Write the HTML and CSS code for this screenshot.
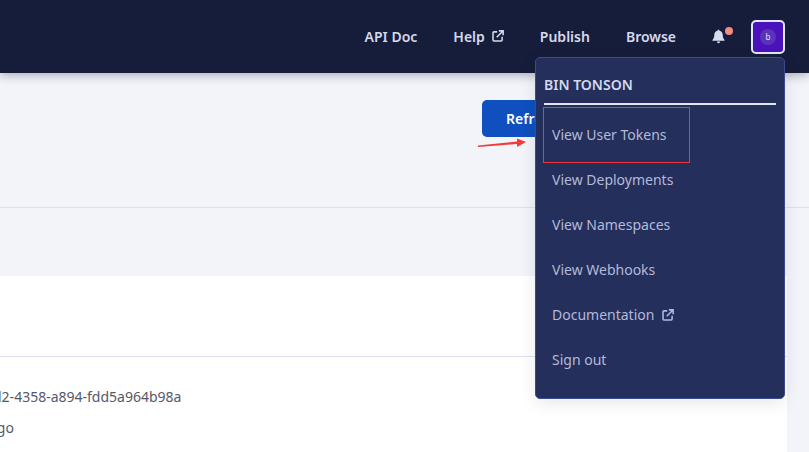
FILE: index.html
```html
<!DOCTYPE html>
<html lang="en">
<head>
<meta charset="utf-8">
<title>Tokens</title>
<link rel="stylesheet" href="styles.css">
</head>
<body>
<header class="topbar">
  <nav class="nav">
    <a class="nav-link">API Doc</a>
    <a class="nav-link">Help
      <svg class="ext" viewBox="0 0 14 14"><path d="M6 2.200H2.200a1 1 0 0 0-1 1v8.600a1 1 0 0 0 1 1h8.600a1 1 0 0 0 1-1V8M5.500 8.500 12.500 1.500M8 1h5v5" fill="none" stroke="currentColor" stroke-width="1.800"/></svg>
    </a>
    <a class="nav-link">Publish</a>
    <a class="nav-link">Browse</a>
  </nav>
  <div class="bell">
    <svg viewBox="0 0 16 16" class="bell-icon"><path d="M8 0.800c.7 0 1.100.5 1.100 1.100 2.200.6 3.400 2.400 3.400 4.600 0 2.400.6 3.700 1.900 5.100.3.400.1.900-.4.900H2c-.5 0-.7-.5-.4-.9C2.900 10.200 3.500 8.900 3.500 6.500c0-2.200 1.200-4 3.400-4.600C6.900 1.300 7.300.8 8 .8zM6.300 13.400h3.400C9.700 14.400 9 15.200 8 15.200s-1.700-.8-1.700-1.800z" fill="currentColor"/></svg>
    <span class="dot"></span>
  </div>
  <div class="avatar"><span class="avatar-inner">b</span></div>
</header>

<main class="page">
  <div class="toolbar"><button class="refresh">Refresh</button></div>
  <div class="band"></div>
  <section class="card">
    <div class="card-head"></div>
    <div class="card-body">
      <p class="row row-id">d2-4358-a894-fdd5a964b98a</p>
      <p class="row row-age">ago</p>
    </div>
  </section>
</main>

<aside class="menu">
  <div class="menu-name">BIN TONSON</div>
  <ul class="menu-list">
    <li>View User Tokens</li>
    <li>View Deployments</li>
    <li>View Namespaces</li>
    <li>View Webhooks</li>
    <li>Documentation
      <svg class="ext ext-menu" viewBox="0 0 14 14"><path d="M6 2.200H2.200a1 1 0 0 0-1 1v8.600a1 1 0 0 0 1 1h8.600a1 1 0 0 0 1-1V8M5.500 8.500 12.500 1.500M8 1h5v5" fill="none" stroke="currentColor" stroke-width="1.800"/></svg>
    </li>
    <li>Sign out</li>
  </ul>
</aside>

<div class="mark-box"></div>
<svg class="mark-arrow" viewBox="0 0 50 12"><path d="M0 8.500 39 4.500 39 1.500 48 5 39 10 39 7 0 10Z" fill="#f23a3a"/></svg>
</body>
</html>
```
FILE: styles.css
```css
* { box-sizing: border-box; }
html, body { margin: 0; height: 100%; overflow: hidden; }
body {
  background: #f3f4fa;
  font-family: "Noto Sans", "Open Sans", sans-serif;
  font-size: 14px;
}
.topbar {
  height: 73px;
  background: #151d3b;
  display: flex;
  align-items: center;
  justify-content: flex-end;
  padding-right: 24px;
  box-shadow: 0 2px 10px rgba(21, 29, 59, .35);
  position: relative;
  z-index: 1;
}
.nav { display: flex; gap: 36px; margin-right: 35px; }
.nav-link {
  color: #d5d9ec;
  font-size: 14px;
  font-weight: 600;
  display: flex;
  align-items: center;
  gap: 7px;
  line-height: 20px;
}
.ext { width: 12px; height: 12px; margin-top: -1px; }
.bell { position: relative; width: 16px; height: 16px; margin-right: 24px; color: #d8dcf0; }
.bell-icon { display: block; width: 15px; height: 15px; }
.dot {
  position: absolute;
  top: -2px;
  left: 14px;
  width: 8px;
  height: 8px;
  border-radius: 50%;
  background: #f38b82;
}
.avatar {
  width: 34px;
  height: 34px;
  border: 2px solid #e3e6f6;
  border-radius: 5px;
  background: #4b12bc;
  display: flex;
  align-items: center;
  justify-content: center;
}
.avatar-inner {
  width: 16px;
  height: 16px;
  border-radius: 50%;
  background: #5b33b8;
  color: #e3e0f5;
  font-size: 8px;
  line-height: 16px;
  text-align: center;
}
.page { display: flex; flex-direction: column; }
.toolbar {
  height: 135px;
  padding: 27px 0 0 482px;
  border-bottom: 1px solid #dcdff0;
}
.refresh {
  width: 130px;
  height: 37px;
  border: 0;
  border-radius: 5px;
  background: #0f4fbf;
  color: #fff;
  font: 600 14px "Noto Sans", sans-serif;
  text-align: left;
  padding-left: 24px;
}
.band { height: 68px; }
.card {
  background: #fff;
  width: 787px;
  height: 176px;
}
.card-head { height: 81px; border-bottom: 1px solid #dcdff0; }
.card-body { padding-top: 29px; color: #55586a; font-size: 14px; }
.row { margin: 0; line-height: 22px; white-space: nowrap; }
.row-id { margin-left: -7px; margin-bottom: 9px; }
.row-age { margin-left: -11px; }
.menu {
  position: absolute;
  z-index: 2;
  left: 535px;
  top: 57px;
  width: 250px;
  height: 342px;
  background: #242f5c;
  border: 1px solid #3a4a8f;
  border-radius: 5px;
  box-shadow: 0 4px 16px rgba(21, 29, 59, .1);
  padding: 0 8px;
}
.menu-name {
  height: 47px;
  padding-top: 16px;
  line-height: 21px;
  font-size: 14px;
  font-weight: 600;
  color: #d5d9ec;
  border-bottom: 2px solid #e4e4ea;
}
.menu-list { list-style: none; margin: 0; padding: 7px 0 0 8px; }
.menu-list li {
  height: 45px;
  display: flex;
  align-items: center;
  gap: 8px;
  color: #b3bad9;
  font-size: 14px;
}
.ext-menu { margin-top: 0; }
.mark-box {
  position: absolute;
  z-index: 3;
  left: 543px;
  top: 107px;
  width: 147px;
  height: 56px;
  border: 1px solid #f0343c;
}
.mark-arrow {
  position: absolute;
  z-index: 3;
  left: 478px;
  top: 137px;
  width: 50px;
  height: 12px;
}
```
